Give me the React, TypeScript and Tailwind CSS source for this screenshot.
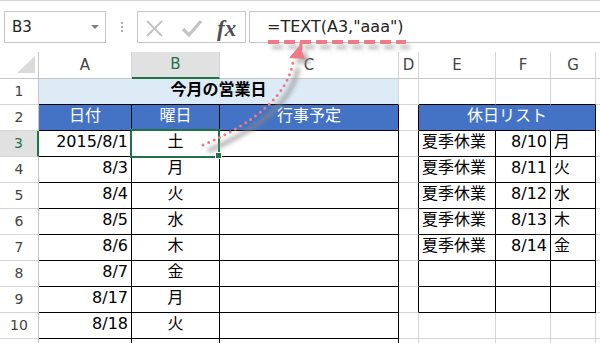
import React from "react";

const aVals = ["2015/8/1", "8/3", "8/4", "8/5", "8/6", "8/7", "8/17", "8/18", ""];
const bVals = ["土", "月", "火", "水", "木", "金", "月", "火", ""];
const eVals = ["夏季休業", "夏季休業", "夏季休業", "夏季休業", "夏季休業"];
const fVals = ["8/10", "8/11", "8/12", "8/13", "8/14"];
const gVals = ["月", "火", "水", "木", "金"];

function rightBlack(r: number, c: number) {
  return (r >= 2 && r <= 11 && c >= 1 && c <= 3) || (r >= 2 && r <= 9 && c >= 4 && c <= 7);
}
function bottomBlack(r: number, c: number) {
  return (r >= 1 && r <= 11 && c >= 1 && c <= 3) || (r >= 1 && r <= 9 && c >= 5 && c <= 7);
}
function borders(r: number, c: number) {
  const rc = c === 8 ? "border-r-0" : rightBlack(r, c) ? "border-r border-r-black" : "border-r border-r-[#d4d4d4]";
  const bcl = bottomBlack(r, c) ? "border-b border-b-black" : "border-b border-b-[#d4d4d4]";
  return rc + " " + bcl;
}

function RowHeader({ n, selected }: { n: number | string; selected?: boolean }) {
  return (
    <div
      className={
        selected
          ? "flex items-center justify-center border-b border-b-[#d4d4d4] border-r-2 border-r-[#217346] bg-[#e1e1e1] text-[14px] text-[#217346]"
          : "flex items-center justify-center border-b border-b-[#d4d4d4] border-r border-r-[#c6c6c6] text-[14px] text-[#444]"
      }
    >
      {n}
    </div>
  );
}

function Cell({
  r,
  c,
  align = "center",
  extra = "",
  children,
}: {
  r: number;
  c: number;
  align?: "left" | "right" | "center";
  extra?: string;
  children?: React.ReactNode;
}) {
  const al =
    align === "right" ? "justify-end pr-[3px]" : align === "left" ? "justify-start pl-[3px]" : "justify-center";
  return (
    <div className={"flex items-center overflow-visible whitespace-nowrap pb-[3px] text-[16px] " + al + " " + borders(r, c) + " " + extra}>
      {children}
    </div>
  );
}

export default function App() {
  const colLetters = ["A", "B", "C", "D", "E", "F", "G"];
  const dataRows = [] as React.ReactNode[];
  for (let i = 0; i < 9; i++) {
    const r = i + 3;
    const gi = i < 5 ? i : -1;
    dataRows.push(
      <React.Fragment key={r}>
        <RowHeader n={r === 11 ? "" : r} selected={r === 3} />
        <Cell r={r} c={1} align="right">{aVals[i]}</Cell>
        <Cell r={r} c={2}>{bVals[i]}</Cell>
        <Cell r={r} c={3} />
        <Cell r={r} c={4} />
        <Cell r={r} c={5} align="left">{gi >= 0 ? eVals[gi] : ""}</Cell>
        <Cell r={r} c={6} align="right">{gi >= 0 ? fVals[gi] : ""}</Cell>
        <Cell r={r} c={7} align="left">{gi >= 0 ? gVals[gi] : ""}</Cell>
        <Cell r={r} c={8} />
      </React.Fragment>
    );
  }

  return (
    <div className="relative h-[343px] w-[600px] overflow-hidden bg-white font-[family-name:'DejaVu_Sans','Noto_Sans_CJK_JP',sans-serif] text-black">
      <div className="h-[1px] bg-[#d4d4d4]" />
      {/* formula bar */}
      <div className="mt-[10px] flex h-[32px] items-stretch">
        <div className="ml-[4px] flex w-[102px] items-center justify-between border border-[#c6c6c6] pl-[7px] pr-[6px]">
          <span className="text-[15px] text-[#222]">B3</span>
          <span className="h-0 w-0 border-x-[4px] border-t-[4px] border-x-transparent border-t-[#808080]" />
        </div>
        <div className="flex w-[31px] flex-col items-center justify-center gap-[2px]">
          <span className="h-[2px] w-[2px] bg-[#b0b0b0]" />
          <span className="h-[2px] w-[2px] bg-[#b0b0b0]" />
          <span className="h-[2px] w-[2px] bg-[#b0b0b0]" />
        </div>
        <div className="relative flex w-[109px] items-center border border-[#c6c6c6]">
          <svg width="109" height="30" viewBox="0 0 109 30" className="absolute left-0 top-0">
            <path d="M9 9 L24 24 M24 9 L9 24" stroke="#c4c4c4" strokeWidth="2" fill="none" />
            <path d="M45 17 L51 23 L63 9" stroke="#c4c4c4" strokeWidth="3.2" fill="none" />
          </svg>
          <span className="absolute left-[79px] top-[0px] font-[family-name:'Liberation_Serif',serif] text-[23px] font-semibold italic text-[#505050]">
            fx
          </span>
        </div>
        <div className="ml-[3px] flex flex-1 items-center border border-r-0 border-[#c6c6c6] pl-[17px]">
          <span className="text-[16px] text-[#222]">=TEXT(A3,"aaa")</span>
        </div>
      </div>

      {/* grid */}
      <div className="mt-[9px] grid grid-cols-[39px_93px_88px_179px_20px_77px_55px_45px_1fr] grid-rows-[27px_repeat(11,26px)]">
        {/* header row */}
        <div className="relative border-b border-b-[#c6c6c6] border-r border-r-[#c6c6c6]">
          <svg width="38" height="26" className="absolute left-0 top-0">
            <polygon points="17,21 35,21 35,4" fill="#dadada" />
          </svg>
        </div>
        {colLetters.map((l) =>
          l === "B" ? (
            <div
              key={l}
              className="flex items-center justify-center border-b-2 border-b-[#217346] border-r border-r-[#d4d4d4] bg-[#e1e1e1] text-[15px] text-[#217346]"
            >
              {l}
            </div>
          ) : (
            <div
              key={l}
              className="flex items-center justify-center border-b border-b-[#c6c6c6] border-r border-r-[#d4d4d4] text-[15px] text-[#444]"
            >
              {l}
            </div>
          )
        )}
        <div className="border-b border-b-[#c6c6c6]" />

        {/* row 1 */}
        <RowHeader n={1} />
        <div className={"col-span-3 flex items-center justify-center bg-[#ddebf7] pb-[3px] text-[16px] font-bold " + borders(1, 3)}>
          今月の営業日
        </div>
        <Cell r={1} c={4} />
        <Cell r={1} c={5} />
        <Cell r={1} c={6} />
        <Cell r={1} c={7} />
        <Cell r={1} c={8} />

        {/* row 2 */}
        <RowHeader n={2} />
        <Cell r={2} c={1} extra="bg-[#4472c4] text-white">日付</Cell>
        <Cell r={2} c={2} extra="bg-[#4472c4] text-white">曜日</Cell>
        <Cell r={2} c={3} extra="bg-[#4472c4] text-white">行事予定</Cell>
        <Cell r={2} c={4} />
        <div className={"col-span-3 flex items-center justify-center bg-[#4472c4] pb-[3px] text-[16px] text-white " + borders(2, 7)}>
          休日リスト
        </div>
        <Cell r={2} c={8} />

        {dataRows}
      </div>

      {/* selection */}
      <div className="pointer-events-none absolute left-[130px] top-[129px] h-[29px] w-[90px] border-2 border-[#217346]" />
      <div className="pointer-events-none absolute left-[215px] top-[152px] h-[7px] w-[7px] border border-white bg-[#217346]" />

      {/* annotation */}
      <svg className="pointer-events-none absolute left-0 top-0" width="600" height="343" viewBox="0 0 600 343">
        <defs>
          <filter id="blur" x="-20%" y="-20%" width="140%" height="140%">
            <feGaussianBlur stdDeviation="2" />
          </filter>
        </defs>
        <g filter="url(#blur)" opacity="0.6">
          <line x1="272" y1="47" x2="410" y2="47" stroke="#8a8a8a" strokeWidth="4" strokeDasharray="11 5" />
          <path d="M208 151 Q 290 116 298 68" stroke="#8a8a8a" strokeWidth="5" fill="none" />
          <polygon points="305,50 294,63 311,64" fill="#8a8a8a" />
        </g>
        <line x1="268" y1="42" x2="406" y2="42" stroke="#ef7b86" strokeWidth="4" strokeDasharray="11 5" />
        <line x1="301" y1="42" x2="301" y2="50" stroke="#ef7b86" strokeWidth="3" />
        <path
          d="M203 145 Q 285 110 293 62"
          stroke="#ef7b86"
          strokeWidth="3"
          fill="none"
          strokeDasharray="0 6"
          strokeLinecap="round"
        />
        <polygon points="300,45 289,58 305,59" fill="#ef7b86" />
      </svg>
    </div>
  );
}
